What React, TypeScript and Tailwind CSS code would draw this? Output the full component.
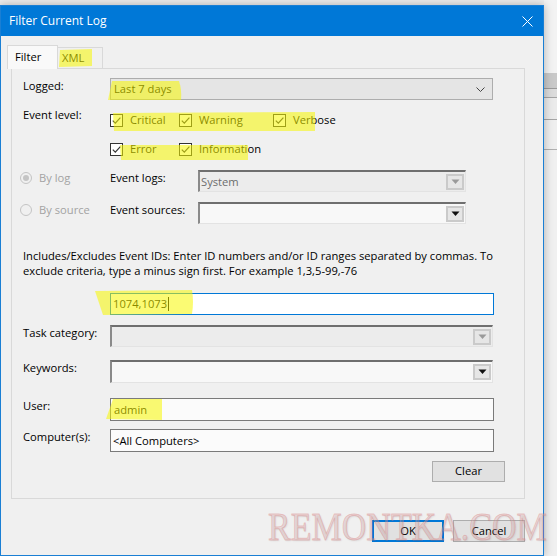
import React from "react";

function Check() {
  return (
    <span className="w-[13px] h-[13px] border border-[#333333] bg-white flex items-center justify-center shrink-0">
      <svg width="11" height="11" viewBox="0 0 11 11">
        <path d="M1.8 5.6 L4.3 8.1 L9.4 2.6" fill="none" stroke="#333333" strokeWidth="1.2" />
      </svg>
    </span>
  );
}

function CheckItem({ label, w }: { label: string; w: string }) {
  return (
    <div className={`flex items-center gap-[7px] h-[16px] ${w}`}>
      <Check />
      <span className="leading-[16px]">{label}</span>
    </div>
  );
}

function Radio({ checked, label }: { checked?: boolean; label: string }) {
  return (
    <div className="flex items-center gap-[7px] h-[16px] w-[90px] ml-[-3px]">
      <span className="w-[12px] h-[12px] rounded-full border border-[#c4c4c4] bg-[#f0f0f0] flex items-center justify-center shrink-0">
        {checked && <span className="w-[6px] h-[6px] rounded-full bg-[#c4c4c4]" />}
      </span>
      <span className="leading-[16px] text-[#a3a3a3]">{label}</span>
    </div>
  );
}

function DropBtn({ disabled }: { disabled?: boolean }) {
  return (
    <span className="mr-[1px] w-[18px] h-[16px] border-2 border-[#cacaca] bg-[#e6e6e6] flex items-center justify-center shrink-0">
      <svg width="9" height="6" viewBox="0 0 9 6">
        <path d="M0.5 0.5 L8.5 0.5 L4.5 5 Z" fill={disabled ? "#9a9a9a" : "#111111"} />
      </svg>
    </span>
  );
}

function ClassicCombo({
  w,
  h,
  text,
  disabled,
}: {
  w: string;
  h: string;
  text?: string;
  disabled?: boolean;
}) {
  return (
    <div
      className={`${w} ${h} flex items-center justify-between border-t-2 border-l-2 border-b border-r border-t-[#6f6f6f] border-l-[#8a8a8a] border-b-[#e3e3e3] border-r-[#e3e3e3] ${
        disabled ? "bg-[#ececec]" : "bg-[#f8f8f8]"
      }`}
    >
      <span className="pl-[1px] leading-[16px] text-[#6d6d6d]">{text}</span>
      <DropBtn disabled={disabled} />
    </div>
  );
}

function Label({ children }: { children: React.ReactNode }) {
  return <div className="w-[87px] shrink-0 leading-[16px]">{children}</div>;
}

function TextBox({ h, children }: { h: string; children?: React.ReactNode }) {
  return (
    <div className={`w-[384px] ${h} border border-[#7a7a7a] bg-[#fbfbfb] flex items-center pl-[2px] leading-[16px]`}>
      {children}
    </div>
  );
}

export default function App() {
  return (
    <div className="w-[557px] h-[556px] relative overflow-hidden bg-[#ededed] flex font-['Open_Sans',sans-serif] text-[11.2px] text-black">
      <div className="mt-[5px] w-[544px] h-[551px] shrink-0 border border-[#1a7fd4] bg-[#f0f0f0] flex flex-col shadow-[0_0_9px_rgba(0,0,0,0.28)] z-10">
        {/* title bar */}
        <div className="h-[30px] bg-[#0078d7] flex items-center justify-between pl-[8px] pr-[10px] text-white">
          <span className="text-[12px]">Filter Current Log</span>
          <svg width="11" height="11" viewBox="0 0 11 11">
            <path d="M0.5 0.5 L10.5 10.5 M10.5 0.5 L0.5 10.5" stroke="white" strokeWidth="1" />
          </svg>
        </div>

        {/* tabs */}
        <div className="flex items-end pl-[6px] mt-[9px] h-[24px] relative z-10">
          <div className="h-[24px] w-[51px] border border-b-0 border-[#d9d9d9] bg-[#f9f9f9] pl-[7px] flex items-center">
            Filter
          </div>
          <div className="h-[21px] mb-[1px] w-[45px] border border-l-0 border-b-0 border-[#d9d9d9] bg-[#f0f0f0] pl-[4px] flex items-center">
            XML
          </div>
        </div>

        {/* panel */}
        <div className="ml-[10px] mt-[-1px] w-[514px] h-[431px] border border-[#d9d9d9] bg-[#f0f0f0] flex flex-col pl-[11px]">
          {/* Logged */}
          <div className="mt-[9px] flex items-start">
            <Label>Logged:</Label>
            <div className="w-[383px] h-[22px] border border-[#adadad] bg-[#e5e5e5] flex items-center justify-between pl-[3px] pr-[7px]">
              <span className="leading-[16px]">Last 7 days</span>
              <svg width="9" height="5" viewBox="0 0 9 5">
                <path d="M0.5 0.5 L4.5 4.5 L8.5 0.5" fill="none" stroke="#444" strokeWidth="1" />
              </svg>
            </div>
          </div>

          {/* Event level */}
          <div className="mt-[7px] flex items-start">
            <Label>Event level:</Label>
            <div className="mt-[5px] flex flex-col">
              <div className="flex">
                <CheckItem label="Critical" w="w-[69px]" />
                <CheckItem label="Warning" w="w-[94px]" />
                <CheckItem label="Verbose" w="w-[80px]" />
              </div>
              <div className="flex mt-[13px]">
                <CheckItem label="Error" w="w-[69px]" />
                <CheckItem label="Information" w="w-[100px]" />
              </div>
            </div>
          </div>

          {/* By log */}
          <div className="mt-[13px] flex items-start">
            <Radio checked label="By log" />
            <div className="w-[88px] leading-[16px]">Event logs:</div>
            <ClassicCombo w="w-[268px]" h="h-[22px]" text="System" disabled />
          </div>

          {/* By source */}
          <div className="mt-[10px] flex items-start">
            <Radio label="By source" />
            <div className="w-[88px] leading-[16px]">Event sources:</div>
            <ClassicCombo w="w-[268px]" h="h-[22px]" />
          </div>

          {/* description */}
          <div className="mt-[24px] leading-[15px]">
            Includes/Excludes Event IDs: Enter ID numbers and/or ID ranges separated by commas. To
            <br />
            exclude criteria, type a minus sign first. For example 1,3,5-99,-76
          </div>

          {/* Event IDs */}
          <div className="mt-[15px] ml-[87px] w-[384px] h-[22px] border border-[#0078d7] bg-white flex items-center pl-[2px] leading-[16px]">
            <span>1074,1073</span>
            <span className="w-[1px] h-[14px] bg-black ml-[1px]" />
          </div>

          {/* Task category */}
          <div className="mt-[10px] flex items-start">
            <Label>Task category:</Label>
            <ClassicCombo w="w-[383px]" h="h-[22px]" disabled />
          </div>

          {/* Keywords */}
          <div className="mt-[13px] flex items-start">
            <Label>Keywords:</Label>
            <ClassicCombo w="w-[383px]" h="h-[23px]" />
          </div>

          {/* User */}
          <div className="mt-[15px] flex items-start">
            <Label>User:</Label>
            <TextBox h="h-[23px]">
              <span className="pl-[1px]">admin</span>
            </TextBox>
          </div>

          {/* Computers */}
          <div className="mt-[8px] flex items-start">
            <Label>Computer(s):</Label>
            <TextBox h="h-[23px]">&lt;All Computers&gt;</TextBox>
          </div>

          {/* Clear */}
          <div className="mt-[9px] self-end mr-[19px] w-[73px] h-[21px] border border-[#adadad] bg-[#e1e1e1] flex items-center justify-center">
            Clear
          </div>
        </div>

        {/* buttons */}
        <div className="mt-[21px] flex justify-end pr-[18px] gap-[9px]">
          <div className="w-[72px] h-[22px] border-2 border-[#0078d7] bg-[#e1e1e1] flex items-center justify-center">
            OK
          </div>
          <div className="w-[72px] h-[22px] border border-[#adadad] bg-[#e1e1e1] flex items-center justify-center">
            Cancel
          </div>
        </div>
      </div>

      {/* window behind, right edge */}
      <div className="flex-1 flex flex-col bg-[#f3f3f3]">
        <div className="h-[73px]" />
        <div className="h-[15px] bg-[#c9c9c9]" />
        <div className="h-[1px] bg-[#9a9a9a]" />
        <div className="h-[8px] bg-[#dcdcdc]" />
        <div className="h-[1px] bg-[#a5a5a5]" />
        <div className="h-[21px] bg-[#ebebeb]" />
        <div className="h-[1px] bg-[#a5a5a5]" />
        <div className="h-[29px] bg-[#efefef]" />
        <div className="h-[1px] bg-[#b0b0b0]" />
        <div className="flex-1 bg-[#f0f0f0]" />
      </div>

      {/* highlighter marks */}
      <svg className="absolute left-0 top-0 z-20 pointer-events-none" width="557" height="556" viewBox="0 0 557 556">
        <g fill="rgba(248,248,0,0.55)">
          <path d="M60 50 L92 49 L92 66 L59 67 Z" />
          <path d="M112 81 L179 81 Q182 90 181 100 L108 100 Z" />
          <path d="M113 113 L315 112 L315 131 L114 131 Z" />
          <path d="M120 145 L248 145 L248 160 L121 160 Z" />
          <path d="M95 291 L192 290 Q194 302 192 314 L103 315 Z" />
          <path d="M113 399 L162 399 L162 420 L106 419 Z" />
        </g>
      </svg>

      {/* watermark */}
      <div className="absolute left-[268px] top-[506px] z-30 pointer-events-none whitespace-nowrap origin-left scale-x-[0.83] font-['Liberation_Serif',serif] text-[41px] leading-none text-[rgba(238,185,185,0.3)] [-webkit-text-stroke:1px_rgba(215,125,125,0.4)] [text-shadow:1px_1px_2px_rgba(0,0,0,0.1)]">
        REMONTKA.COM
      </div>
    </div>
  );
}
